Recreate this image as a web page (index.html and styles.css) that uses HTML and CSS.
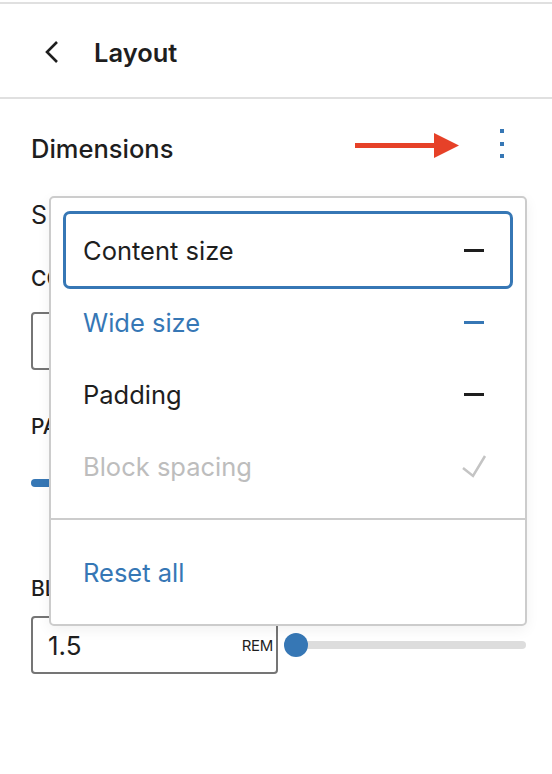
FILE: index.html
```html
<!DOCTYPE html>
<html>
<head>
<meta charset="utf-8">
<link rel="stylesheet" href="styles.css">
</head>
<body>
<div class="sidebar">
  <header class="header">
    <svg class="back" width="16" height="24" viewBox="0 0 16 24"><polyline points="13,2 3,12 13,22" fill="none" stroke="#1e1e1e" stroke-width="2.6"/></svg>
    <h1 class="title">Layout</h1>
  </header>
  <section class="panel">
    <div class="dim-row">
      <h2 class="dim-title">Dimensions</h2>
      <svg class="dots" width="24" height="36" viewBox="0 0 24 36"><rect x="10" y="3" width="4" height="4" fill="#3677b5"/><rect x="10" y="16" width="4" height="4" fill="#3677b5"/><rect x="10" y="28" width="4" height="4" fill="#3677b5"/></svg>
    </div>
    <div class="sizes">S</div>
    <div class="label lbl-content">CONTENT</div>
    <div class="input input-content"></div>
    <div class="label lbl-padding">PADDING</div>
    <div class="pad-slider"><span class="pad-fill"></span></div>
    <div class="label lbl-block">BLOCK</div>
    <div class="unit-row">
      <div class="input input-block"><span class="value">1.5</span><span class="unit">REM</span></div>
      <div class="range"><span class="thumb"></span></div>
    </div>
  </section>
</div>

<svg class="arrow" width="110" height="30" viewBox="0 0 110 30"><rect x="0" y="10" width="82" height="5" fill="#e64128"/><polygon points="79,0 104,12.5 79,25" fill="#e64128"/></svg>

<div class="popover">
  <div class="group">
    <div class="item focused"><span>Content size</span><span class="minus dark"></span></div>
    <div class="item blue"><span>Wide size</span><span class="minus bluebar"></span></div>
    <div class="item"><span>Padding</span><span class="minus dark"></span></div>
    <div class="item disabled"><span>Block spacing</span>
      <svg class="check" width="26" height="24" viewBox="0 0 26 24"><polyline points="2,14 12,22 24,2" fill="none" stroke="#c4c4c4" stroke-width="2.5"/></svg>
    </div>
  </div>
  <div class="group last">
    <div class="item blue"><span>Reset all</span></div>
  </div>
</div>
</body>
</html>
```

FILE: styles.css
```css
html, body {
  margin: 0;
  padding: 0;
  background: #fff;
}
body {
  font-family: "Inter", "Noto Sans", sans-serif;
  color: #1e1e1e;
  padding-top: 2px;
  position: relative;
  height: 772px;
  overflow: hidden;
}
.header {
  height: 93px;
  border-top: 2px solid #e0e0e0;
  border-bottom: 2px solid #e0e0e0;
  display: flex;
  align-items: center;
  padding-left: 44px;
}
.back {
  display: block;
  margin-top: 2px;
}
.title {
  margin: 3px 0 0 34px;
  font-size: 25.5px;
  font-weight: 600;
  letter-spacing: 0;
}
.panel {
  padding-left: 31px;
}
.dim-row {
  height: 96px;
  display: flex;
  align-items: center;
  justify-content: space-between;
  padding-right: 38px;
}
.dim-title {
  margin: 2px 0 0;
  font-size: 25.5px;
  font-weight: 500;
}
.dots {
  display: block;
  margin-top: -6px;
}
.sizes {
  font-size: 25px;
  line-height: 40px;
}
.label {
  font-size: 21px;
  font-weight: 500;
  line-height: 30px;
}
.lbl-content { margin-top: 29px; }
.input {
  box-sizing: border-box;
  width: 247px;
  height: 58px;
  border: 2px solid #757575;
  border-radius: 4px;
}
.input-content {
  margin-top: 18px;
}
.lbl-padding { margin-top: 42px; }
.pad-slider {
  margin-top: 37px;
  height: 8px;
  width: 495px;
}
.pad-fill {
  display: block;
  width: 30px;
  height: 8px;
  border-radius: 4px;
  background: #3677b5;
}
.lbl-block { margin-top: 87px; }
.unit-row {
  margin-top: 12px;
  display: flex;
  align-items: center;
  gap: 8px;
  width: 495px;
}
.input-block {
  display: flex;
  align-items: center;
  justify-content: space-between;
  padding: 0 3px 0 15px;
  flex: none;
}
.value {
  font-size: 26px;
}
.unit {
  font-size: 15px;
  letter-spacing: -0.3px;
  color: #1e1e1e;
}
.range {
  position: relative;
  flex: 1;
  height: 8px;
  border-radius: 4px;
  background: #dddddd;
  margin-left: 10px;
}
.thumb {
  position: absolute;
  left: -12px;
  top: -8px;
  width: 24px;
  height: 24px;
  border-radius: 50%;
  background: #3677b5;
}
.arrow {
  position: absolute;
  left: 355px;
  top: 133px;
}
.popover {
  position: absolute;
  left: 49px;
  top: 196px;
  width: 478px;
  box-sizing: border-box;
  border: 2px solid #cccccc;
  border-radius: 5px;
  background: #fff;
  box-shadow: 0 4px 14px rgba(0,0,0,0.06);
}
.group {
  padding: 16px 15px;
}
.group.last {
  border-top: 2px solid #cccccc;
}
.item {
  height: 72px;
  display: flex;
  align-items: center;
  justify-content: space-between;
  padding: 0 26px 0 17px;
  font-size: 25.5px;
  border-radius: 4px;
}
.item.focused {
  box-shadow: 0 0 0 3px #3677b5;
}
.item.blue {
  color: #3677b5;
}
.item.disabled {
  color: #bdbdbd;
}
.minus {
  display: block;
  width: 20px;
  height: 3px;
}
.minus.dark { background: #1e1e1e; }
.minus.bluebar { background: #3677b5; }
.check {
  display: block;
  margin-right: -3px;
}
```
